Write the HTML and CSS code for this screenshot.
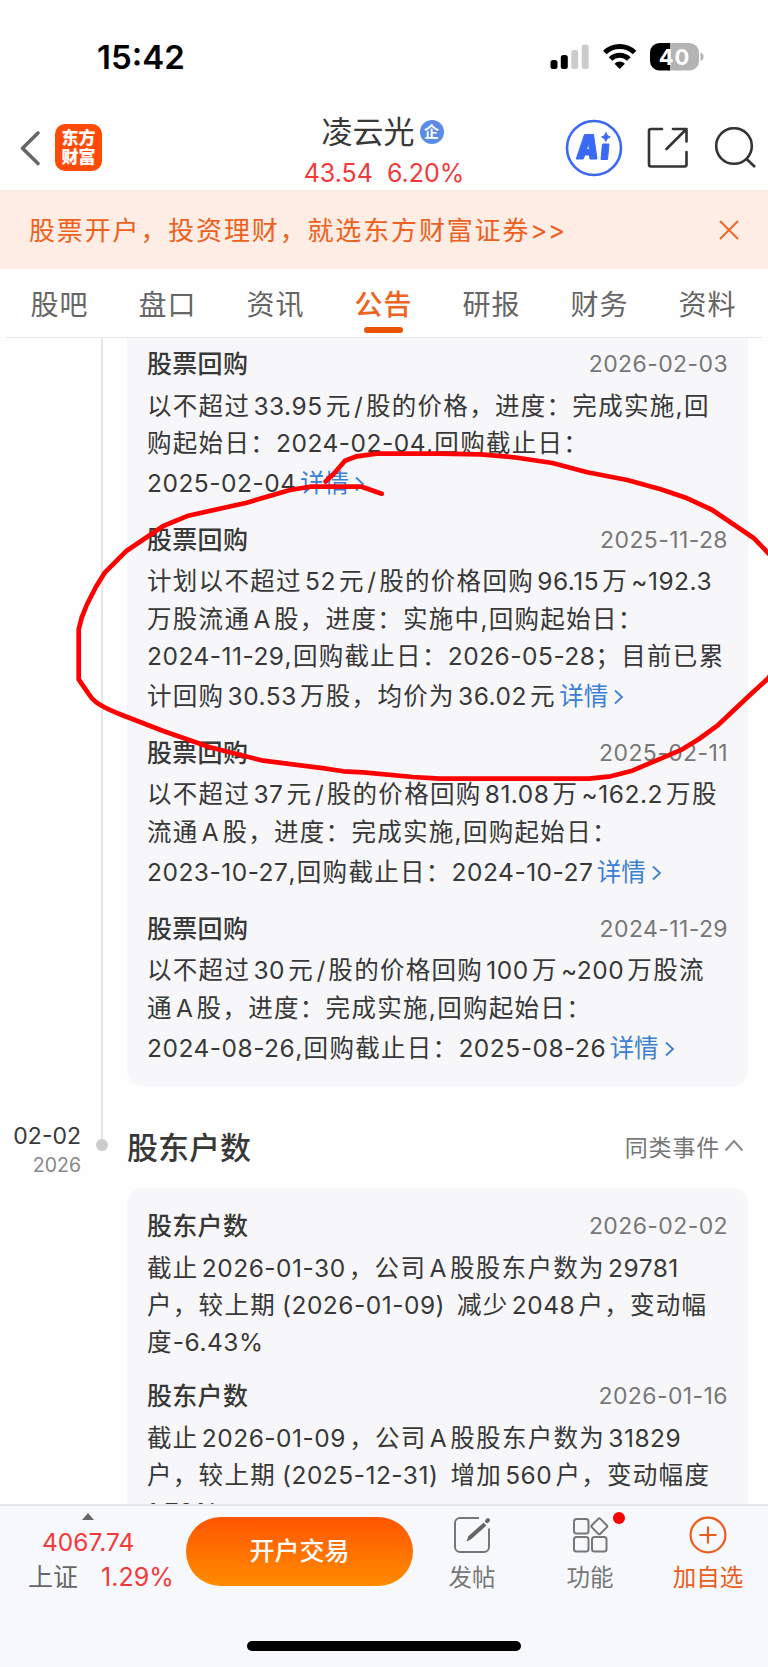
FILE: index.html
```html
<!DOCTYPE html>
<html lang="zh-CN">
<head>
    <meta charset="UTF-8">
    <meta name="viewport" content="width=device-width, initial-scale=1.0">
    <title>凌云光 公告</title>
    <link rel="stylesheet" href="styles.css">
</head>
<body>
    <div class="phone">
        <div class="status-bar">
            <span class="time">15:42</span>
            <svg class="status-icons" width="156" height="30" viewBox="0 0 156 30">
                <rect x="0.5" y="18" width="7" height="9" rx="2.5" fill="#000"/>
                <rect x="10.8" y="13" width="7" height="14" rx="2.5" fill="#000"/>
                <rect x="21.2" y="8" width="7" height="19" rx="2.5" fill="#ccc"/>
                <rect x="31.7" y="2.5" width="7" height="24.5" rx="2.5" fill="#ccc"/>
                <g fill="none" stroke="#000" stroke-width="5">
                    <path d="M54.8 10.5a21.5 21.5 0 0 1 29.8 0"/>
                    <path d="M60.5 17a13 13 0 0 1 18.4 0"/>
                </g>
                <path d="M69.7 27l-5.2-5.300a7.500 7.500 0 0 1 10.400 0z" fill="#000"/>
                <path d="M119 1h20.5a9.5 9.5 0 0 1 9.5 9.5v8.5a9.5 9.5 0 0 1-9.5 9.5H119z" fill="#b3b3b3"/>
                <path d="M120 1v27.5h-10.5a9.5 9.5 0 0 1-9.5-9.5v-8.5a9.5 9.5 0 0 1 9.5-9.5z" fill="#000"/>
                <path d="M150.5 10.5q3 1 3 4.2t-3 4.2z" fill="#b3b3b3"/>
                <text x="124.5" y="23" text-anchor="middle" class="battery-text">40</text>
            </svg>
        </div>

        <div class="header">
            <div class="header-left">
                <svg width="24" height="38" viewBox="0 0 24 38" fill="none" stroke="#666" stroke-width="3.6" stroke-linecap="round" stroke-linejoin="round"><path d="M20 4L4.5 19.3L20 34.5"/></svg>
                <div class="logo"><span>东方</span><span>财富</span></div>
            </div>
            <div class="stock">
                <div class="stock-name">凌云光<span class="badge">企</span></div>
                <div class="stock-price"><span>43.54</span><span>6.20%</span></div>
            </div>
            <div class="header-right">
                <svg width="58" height="58" viewBox="0 0 58 58">
                    <circle cx="29" cy="29" r="27" fill="none" stroke="#3a69f5" stroke-width="2.6"/>
                    <path d="M19.5 15.5h9l3.5 24.5h-7l-.6-4h-4.6l-1.6 4h-7zM23.500 24l-2 6.500h2.800z" fill="#3a69f5" stroke="#3a69f5" stroke-width="1" stroke-linejoin="round" fill-rule="evenodd"/>
                    <path d="M37.5 25h6.5l-1.5 15.5h-6.5zM41 13.500q1 4 4.300 4.500q-3.500 .8-4.500 4.500q-1-3.900-4.200-4.500q3.600-.7 4.400-4.500z" fill="#3a69f5" stroke="#3a69f5" stroke-width="1" stroke-linejoin="round"/>
                </svg>
                <svg width="42" height="42" viewBox="0 0 42 42" fill="none" stroke="#333" stroke-width="2.6" stroke-linejoin="round" stroke-linecap="round">
                    <path d="M15 2H4a2 2 0 0 0-2 2v33.5a2 2 0 0 0 2 2h33.5a2 2 0 0 0 2-2V25M26 2h13.5v12.5M39 2.5L19.5 22"/>
                </svg>
                <svg width="42" height="42" viewBox="0 0 42 42" fill="none" stroke="#333" stroke-width="2.6"><circle cx="20" cy="19" r="17.8"/><path d="M32 31.5l9 8.5"/></svg>
            </div>
        </div>

        <div class="banner">
            <span>股票开户，投资理财，就选东方财富证券<em>&gt;&gt;</em></span>
            <svg width="20" height="20" viewBox="0 0 20 20" stroke="#ee6826" stroke-width="2"><path d="M1 1l18 18M19 1L1 19"/></svg>
        </div>

        <div class="tabs">
            <span class="tab">股吧</span>
            <span class="tab">盘口</span>
            <span class="tab">资讯</span>
            <span class="tab active">公告</span>
            <span class="tab">研报</span>
            <span class="tab">财务</span>
            <span class="tab">资料</span>
        </div>

        <div class="timeline">
            <div class="event">
                <div class="event-date"></div>
                <div class="event-axis line"></div>
                <div class="card card-top">
                    <div class="item">
                        <div class="item-head"><h3>股票回购</h3><time>2026-02-03</time></div>
                        <p>以不超过<b>33.95</b>元<i>/</i>股的价格，进度：完成实施,回</p>
                        <p>购起始日：<em>2024-02-04</em>,回购截止日：</p>
                        <p class="more"><em>2025-02-04</em><a>详情<svg width="11" height="16" viewBox="0 0 11 16"><path d="M2 1.5l7 6.5l-7 6.5"/></svg></a></p>
                    </div>
                    <div class="item">
                        <div class="item-head"><h3>股票回购</h3><time>2025-11-28</time></div>
                        <p>计划以不超过<b>52</b>元<i>/</i>股的价格回购<b>96.15</b>万<b>~192.3</b></p>
                        <p>万股流通<b>A</b>股，进度：实施中,回购起始日：</p>
                        <p><em>2024-11-29</em>,回购截止日：<em>2026-05-28</em>；目前已累</p>
                        <p class="more">计回购<b>30.53</b>万股，均价为<b>36.02</b>元<a>详情<svg width="11" height="16" viewBox="0 0 11 16"><path d="M2 1.5l7 6.5l-7 6.5"/></svg></a></p>
                    </div>
                    <div class="item">
                        <div class="item-head"><h3>股票回购</h3><time>2025-02-11</time></div>
                        <p>以不超过<b>37</b>元<i>/</i>股的价格回购<b>81.08</b>万<b>~162.2</b>万股</p>
                        <p>流通<b>A</b>股，进度：完成实施,回购起始日：</p>
                        <p class="more"><em>2023-10-27</em>,回购截止日：<em>2024-10-27</em><a>详情<svg width="11" height="16" viewBox="0 0 11 16"><path d="M2 1.5l7 6.5l-7 6.5"/></svg></a></p>
                    </div>
                    <div class="item">
                        <div class="item-head"><h3>股票回购</h3><time>2024-11-29</time></div>
                        <p>以不超过<b>30</b>元<i>/</i>股的价格回购<b>100</b>万<b>~200</b>万股流</p>
                        <p>通<b>A</b>股，进度：完成实施,回购起始日：</p>
                        <p class="more"><em>2024-08-26</em>,回购截止日：<em>2025-08-26</em><a>详情<svg width="11" height="16" viewBox="0 0 11 16"><path d="M2 1.5l7 6.5l-7 6.5"/></svg></a></p>
                    </div>
                </div>
            </div>

            <div class="event">
                <div class="event-date"><strong>02-02</strong><span>2026</span></div>
                <div class="event-axis"><div class="stem"></div><div class="dot"></div></div>
                <div class="event-body">
                    <div class="event-head">
                        <h2>股东户数</h2>
                        <span>同类事件<svg width="20" height="13" viewBox="0 0 20 13"><path d="M1.5 11.5L10 2l8.5 9.5"/></svg></span>
                    </div>
                    <div class="card card-holders">
                        <div class="item">
                            <div class="item-head"><h3>股东户数</h3><time>2026-02-02</time></div>
                            <p>截止<b>2026-01-30</b>，公司<b>A</b>股股东户数为<b>29781</b></p>
                            <p>户，较上期<b class="paren">(2026-01-09)</b>减少<b>2048</b>户，变动幅</p>
                            <p>度<em>-6.43%</em></p>
                        </div>
                        <div class="item">
                            <div class="item-head"><h3>股东户数</h3><time>2026-01-16</time></div>
                            <p>截止<b>2026-01-09</b>，公司<b>A</b>股股东户数为<b>31829</b></p>
                            <p>户，较上期<b class="paren">(2025-12-31)</b>增加<b>560</b>户，变动幅度</p>
                            <p><em>1.79%</em></p>
                        </div>
                    </div>
                </div>
            </div>
        </div>

        <div class="footer">
            <div class="index">
                <div class="arrow"></div>
                <div class="index-value">4067.74</div>
                <div class="index-row"><span>上证</span><span class="up">1.29%</span></div>
            </div>
            <div class="open-btn">开户交易</div>
            <div class="action">
                <svg width="38" height="38" viewBox="0 0 38 38" fill="none" stroke="#777" stroke-width="2">
                    <path d="M26 2H7a5 5 0 0 0-5 5v24a5 5 0 0 0 5 5h24a5 5 0 0 0 5-5V12.5"/>
                    <path d="M14.5 24.5l1.5-4L30.5 7.5l2 2L18 22.5z" stroke="#666" fill="#666" stroke-width="1.2" stroke-linejoin="round"/>
                    <path d="M34 5.2l1-1" stroke="#666" stroke-width="4" stroke-linecap="round"/>
                </svg>
                <span>发帖</span>
            </div>
            <div class="action">
                <svg width="38" height="38" viewBox="0 0 38 38" fill="none" stroke="#777" stroke-width="2" stroke-linejoin="round">
                    <rect x="3" y="3" width="14.5" height="14.5" rx="2.5"/>
                    <rect x="3" y="21" width="14.5" height="14.5" rx="2.5"/>
                    <rect x="21" y="21" width="14.5" height="14.5" rx="2.5"/>
                    <rect x="22.3" y="4.3" width="12" height="12" rx="1.5" transform="rotate(45 28.3 10.3)"/>
                </svg>
                <i class="red-dot"></i>
                <span>功能</span>
            </div>
            <div class="action add">
                <svg width="38" height="38" viewBox="0 0 38 38" fill="none" stroke="#ea5e1b" stroke-width="2.2"><circle cx="19" cy="19" r="17.4"/><path d="M19 10.5v17M10.5 19h17"/></svg>
                <span>加自选</span>
            </div>
            <div class="home-bar"></div>
        </div>

        <!-- hand-drawn marker over the second record -->
        <svg class="marker" width="768" height="1667" viewBox="0 0 768 1667">
            <path d="M325.7 481.5L334 473.5L345 460.7L356.7 456.3L376.7 453.7H440L480.7 454.3L514 457.3L552.3 463L587.3 472.3L627.3 480L660.7 489.3L687.3 498.3L712.3 510L754 538.3L775 560M775 669L768 678.5L750.7 694.3L717.3 725.7L699 739L682.3 749.3L659 759.3L632.3 770.7L610.7 776.3L589 778.7H440L413 777L363.3 772.3L343.3 771.3L326.7 768.7L263.3 760.7L210 747.3L163.3 731L120 714.3Q104 708 96.7 702.7Q91 698 88.3 693.3L78.7 679.3V629.3L81.7 617.7L86.7 605L96 586.7L105 572.3L126.7 550.7L163.3 526L188.3 515.7L246.7 502.7L290 490L310 486.7H361.7L381.7 493.7"/>
        </svg>
    </div>
</body>
</html>
```

FILE: styles.css
```css
* {
    box-sizing: border-box;
}

body {
    margin: 0;
    background: #fff;
    font-family: Inter, "Noto Sans CJK SC", sans-serif;
    color: #383838;
}

h2, h3, p {
    margin: 0;
}

.phone {
    position: relative;
    width: 768px;
    height: 1667px;
    overflow: hidden;
    display: flex;
    flex-direction: column;
    background: #fefefe;
}

/* status bar */
.status-bar {
    height: 114px;
    padding: 0 62px 0 97px;
    display: flex;
    justify-content: space-between;
    align-items: center;
}

.time {
    font-size: 33px;
    font-weight: 600;
    color: #000;
}

.battery-text {
    fill: #fff;
    font-size: 22px;
    font-weight: 700;
    letter-spacing: 1px;
}

/* header */
.header {
    height: 77px;
    display: grid;
    grid-template-columns: 240px 288px 240px;
    border-bottom: 1px solid #eee;
}

.header-left {
    display: flex;
    align-items: center;
    gap: 13px;
    height: 67px;
    padding-left: 18px;
}

.logo {
    width: 47px;
    height: 47px;
    border-radius: 10px;
    background: #ff4a08;
    color: #fff;
    font-size: 17px;
    font-weight: 900;
    line-height: 19px;
    display: flex;
    flex-direction: column;
    align-items: center;
    justify-content: center;
}

.stock {
    display: flex;
    flex-direction: column;
    align-items: center;
}

.stock-name {
    display: flex;
    align-items: center;
    gap: 5px;
    height: 36px;
    padding-right: 3px;
    font-size: 31px;
    line-height: 34px;
}

.badge {
    width: 24px;
    height: 24px;
    border-radius: 50%;
    background: #5b8be8;
    color: #fff;
    font-size: 15px;
    font-weight: 700;
    line-height: 23px;
    text-align: center;
}

.stock-price {
    display: flex;
    gap: 14px;
    margin-top: 8px;
    font-size: 25px;
    line-height: 30px;
    color: #f23a3d;
}

.header-right {
    display: flex;
    align-items: center;
    height: 67px;
    padding-left: 37px;
}

.header-right svg:nth-child(2) {
    margin-left: 24px;
}

.header-right svg:nth-child(3) {
    margin-left: 25px;
}

/* banner */
.banner {
    height: 78px;
    padding: 0 29px;
    display: flex;
    justify-content: space-between;
    align-items: center;
    background: #fdede4;
    color: #ee6020;
    font-size: 26px;
    letter-spacing: 1.85px;
}

.banner span {
    margin-top: -4px;
}

.banner em {
    font-style: normal;
    letter-spacing: 0.5px;
}

/* tabs */
.tabs {
    display: flex;
    height: 69px;
    margin: 0 6px;
    border-bottom: 1px solid #e6e7ea;
}

.tab {
    position: relative;
    width: 108px;
    padding-right: 1px;
    text-align: center;
    font-size: 28px;
    line-height: 72px;
    letter-spacing: 1px;
    color: #666;
}

.tab.active {
    color: #f0631e;
    font-weight: 500;
}

.tab.active::after {
    content: "";
    position: absolute;
    left: 34px;
    bottom: 4px;
    width: 39px;
    height: 6px;
    border-radius: 3px;
    background: #ea5504;
}

/* timeline */
.timeline {
    height: 1166px;
    overflow: hidden;
}

.event {
    display: grid;
    grid-template-columns: 81px 46px 621px;
}

.event-axis {
    display: flex;
    flex-direction: column;
    align-items: center;
    padding-right: 5px;
}

.event-axis.line::before,
.stem {
    content: "";
    width: 2px;
    height: 53px;
    background: #e5e5e5;
}

.event-axis.line::before {
    height: 100%;
}

.dot {
    width: 12px;
    height: 12px;
    border-radius: 50%;
    background: #ccc;
}

.event-date {
    display: flex;
    flex-direction: column;
    align-items: flex-end;
}

.event-date strong {
    margin-top: 35px;
    font-size: 23px;
    font-weight: 400;
    line-height: 30px;
}

.event-date span {
    font-size: 19.5px;
    line-height: 28px;
    color: #888;
}

.event-head {
    display: flex;
    justify-content: space-between;
    align-items: center;
    height: 102px;
    padding: 17px 4px 0 0;
}

.event-head h2 {
    font-size: 31px;
    font-weight: 500;
}

.event-head span {
    display: flex;
    align-items: center;
    gap: 4px;
    font-size: 23px;
    letter-spacing: 0.8px;
    color: #777;
}

.event-head svg path {
    fill: none;
    stroke: #888;
    stroke-width: 2;
}

.card {
    padding: 18px 20px 0;
    border-radius: 16px;
    background: #f7f7fa;
    white-space: nowrap;
}

.card-top {
    height: 748px;
    padding-top: 6px;
    border-radius: 0 0 16px 16px;
}

.item {
    margin-bottom: 14px;
}

.item-head {
    display: flex;
    justify-content: space-between;
    align-items: center;
    height: 40px;
    margin-bottom: 3.5px;
}

.item-head h3 {
    margin-top: -4px;
    font-size: 25px;
    font-weight: 500;
    letter-spacing: 0.3px;
}

.item-head time {
    font-size: 23px;
    letter-spacing: 0.4px;
    color: #777;
}

.item p {
    height: 37.4px;
    font-size: 24.5px;
    line-height: 37.4px;
    letter-spacing: 1.3px;
}

.item p.more {
    height: 43.5px;
    line-height: 43.5px;
}

.card-holders .item {
    margin-bottom: 15px;
}

.card-holders .item-head {
    margin-bottom: 4px;
}

.card-holders .item p {
    height: 37px;
    line-height: 37px;
}

.item b,
.item em,
.item i {
    font-weight: 400;
    font-style: normal;
    letter-spacing: 0.5px;
}

.item b {
    margin: 0 3.2px;
}

.item b.paren {
    margin: 0 12px 0 6px;
}

.item i {
    margin: 0 2.5px;
}

.item a {
    margin-left: 3.5px;
    color: #3b80d2;
    letter-spacing: 0;
}

.item a svg {
    margin-left: 5px;
    fill: none;
    stroke: #3b80d2;
    stroke-width: 1.8;
}

/* footer */
.footer {
    position: relative;
    flex: 1;
    display: flex;
    background: #f7f8fb;
    border-top: 2px solid #e3e6ea;
}

.index {
    width: 186px;
    padding-top: 7px;
}

.arrow {
    width: 0;
    margin-left: 82px;
    border: 6.5px solid transparent;
    border-top: 0;
    border-bottom: 7px solid #666;
}

.index-value {
    margin-top: 5px;
    padding-left: 42px;
    font-size: 24.5px;
    line-height: 34px;
    color: #f23a3d;
}

.index-row {
    display: flex;
    gap: 23px;
    padding-left: 28px;
    font-size: 25px;
    line-height: 36px;
    color: #666;
}

.index-row .up {
    color: #f23a3d;
}

.open-btn {
    width: 227px;
    height: 69px;
    margin-top: 11px;
    border-radius: 35px;
    background: linear-gradient(#ff5500, #ff8c00);
    color: #fff;
    font-size: 25px;
    font-weight: 500;
    line-height: 69px;
    text-align: center;
}

.action {
    position: relative;
    width: 118px;
    padding-top: 10px;
    display: flex;
    flex-direction: column;
    align-items: center;
    font-size: 23.5px;
    line-height: 34px;
    color: #777;
}

.action span {
    margin-top: 7px;
}

.action.add {
    color: #ea5e1b;
}

.red-dot {
    position: absolute;
    left: 82px;
    top: 6px;
    width: 12px;
    height: 12px;
    border-radius: 50%;
    background: #ff0000;
}

.home-bar {
    position: absolute;
    left: 247px;
    bottom: 16px;
    width: 274px;
    height: 10px;
    border-radius: 5px;
    background: #000;
}

.marker {
    position: absolute;
    left: 0;
    top: 0;
    fill: none;
    stroke: #fe0000;
    stroke-width: 4.7;
    stroke-linecap: round;
    stroke-linejoin: round;
}
```
